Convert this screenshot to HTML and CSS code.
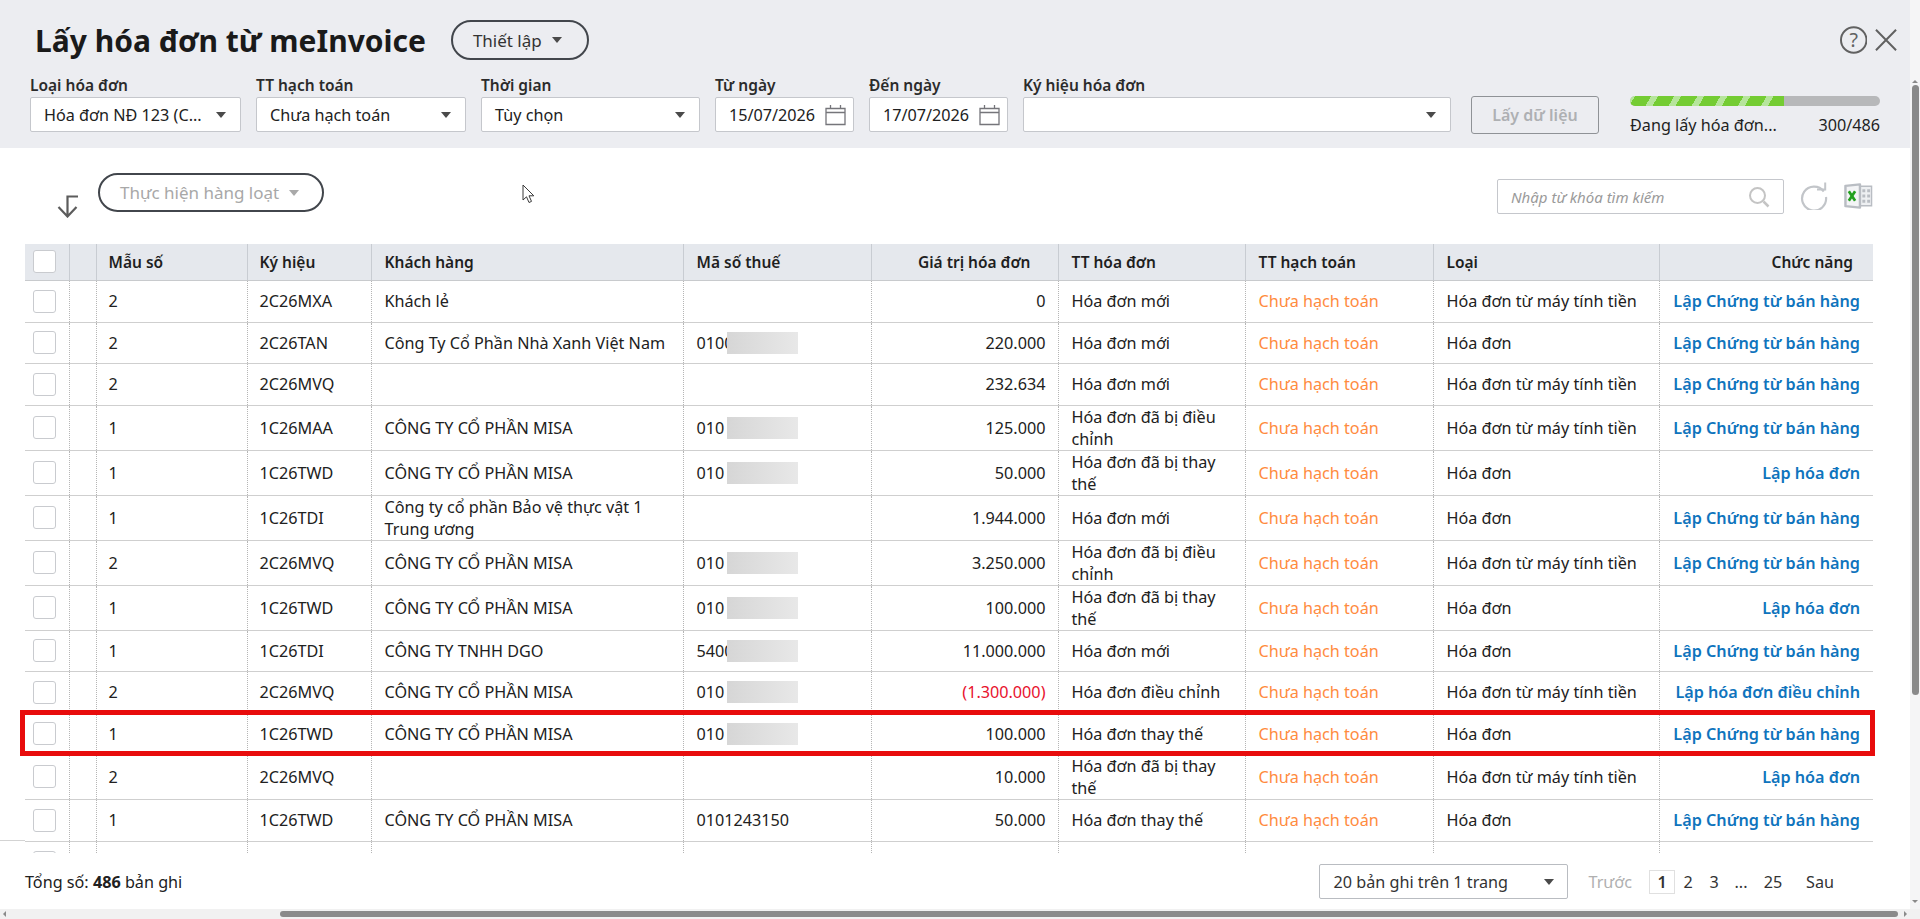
FILE: index.html
```html
<!DOCTYPE html>
<html lang="vi">
<head>
    <meta charset="UTF-8">
    <meta name="viewport" content="width=device-width, initial-scale=1.0">
    <title>Lấy hóa đơn từ meInvoice</title>
    <link rel="stylesheet" href="styles.css">
</head>
<body>
<div class="app">
    <div class="page">
        <header class="top">
            <div class="title-row">
                <h1 class="title">Lấy hóa đơn từ meInvoice</h1>
                <button class="pill pill-setup">Thiết lập <i class="caret"></i></button>
                <div class="top-icons">
                    <svg class="icon-help" width="28" height="28" viewBox="0 0 28 28"><circle cx="14" cy="14" r="13" fill="none" stroke="#616161" stroke-width="2"/><text x="14" y="21" text-anchor="middle" class="help-mark">?</text></svg>
                    <svg class="icon-close" width="24" height="24" viewBox="0 0 24 24"><path d="M2 1.5 L22.5 22.5 M22.5 1.5 L2 22.5" stroke="#616161" stroke-width="2" fill="none"/></svg>
                </div>
            </div>
            <div class="filters">
                <div class="field f-type"><label>Loại hóa đơn</label><div class="box"><span>Hóa đơn NĐ 123 (C...</span><i class="caret"></i></div></div>
                <div class="field f-status"><label>TT hạch toán</label><div class="box"><span>Chưa hạch toán</span><i class="caret"></i></div></div>
                <div class="field f-time"><label>Thời gian</label><div class="box"><span>Tùy chọn</span><i class="caret"></i></div></div>
                <div class="field f-date"><label>Từ ngày</label><div class="box date"><span>15/07/2026</span>
                    <svg class="cal" width="21" height="22" viewBox="0 0 21 22"><path d="M1 4.5h19v16H1z M1 8.5h19 M5.500 1v3.500 M15.500 1v3.500" fill="none" stroke="#75757a" stroke-width="1.300"/></svg></div></div>
                <div class="field f-date"><label>Đến ngày</label><div class="box date"><span>17/07/2026</span>
                    <svg class="cal" width="21" height="22" viewBox="0 0 21 22"><path d="M1 4.5h19v16H1z M1 8.5h19 M5.500 1v3.500 M15.500 1v3.500" fill="none" stroke="#75757a" stroke-width="1.300"/></svg></div></div>
                <div class="field f-sign"><label>Ký hiệu hóa đơn</label><div class="box"><span></span><i class="caret"></i></div></div>
                <button class="btn-fetch">Lấy dữ liệu</button>
                <div class="progress">
                    <div class="progress-bar"><div class="progress-fill"></div></div>
                    <div class="progress-text"><span>Đang lấy hóa đơn...</span><span>300/486</span></div>
                </div>
            </div>
        </header>

        <section class="toolbar">
            <svg class="icon-down" width="24" height="24" viewBox="0 0 24 24"><path d="M22 2.500H11.500V22 M2.500 13 L11.500 22.500 L20.500 13" fill="none" stroke="#5c5c5c" stroke-width="2.200"/></svg>
            <button class="pill pill-bulk">Thực hiện hàng loạt <i class="caret caret-light"></i></button>
            <svg class="cursor" width="14" height="20" viewBox="0 0 14 20"><path d="M1 1 V16 L4.500 12.800 L7 18.500 L9.500 17.400 L7 11.800 H11.800 Z" fill="#fff" stroke="#3a3a3a" stroke-width="1"/></svg>
            <div class="tools">
                <div class="search"><span>Nhập từ khóa tìm kiếm</span>
                    <svg width="22" height="22" viewBox="0 0 22 22"><circle cx="9.500" cy="9.500" r="7.500" fill="none" stroke="#c4c4c4" stroke-width="2"/><path d="M15.500 15.500 L20.500 20.500" stroke="#c4c4c4" stroke-width="2.500"/></svg>
                </div>
                <svg class="icon-refresh" width="28" height="28" viewBox="0 0 28 28"><path d="M23.800 9.500A12 12 0 1 0 26 15" fill="none" stroke="#c2c5c9" stroke-width="2.200"/><path d="M17 7.500H25.200V0.500" fill="none" stroke="#c2c5c9" stroke-width="2"/></svg>
                <svg class="icon-excel" width="29" height="26" viewBox="0 0 30 26"><path d="M16 3H28.500V23H16" fill="#eef0f2" stroke="#b9bdc3" stroke-width="1.500"/><path d="M1.500 2.500 L16.500 1 V25 L1.500 23.500 Z" fill="#f3f4f6" stroke="#b9bdc3" stroke-width="2.500" stroke-linejoin="round"/><path d="M19 6h3v3h-3z M24 6h3v3h-3z M19 11.500h3v3h-3z M24 11.500h3v3h-3z M19 17h3v3h-3z M24 17h3v3h-3z" fill="#b9bdc3"/><path d="M5 8 L11.500 18 M11.500 8 L5 18" stroke="#22a01e" stroke-width="2.800"/></svg>
            </div>
        </section>

        <section class="grid-wrap">
            <table class="grid">
                <colgroup>
                    <col class="c-check"><col class="c-blank"><col class="c-form"><col class="c-sign"><col class="c-cust"><col class="c-tax"><col class="c-value"><col class="c-inv"><col class="c-acc"><col class="c-kind"><col class="c-act">
                </colgroup>
                <thead>
                    <tr>
                        <th><i class="check"></i></th><th></th><th>Mẫu số</th><th>Ký hiệu</th><th>Khách hàng</th><th>Mã số thuế</th>
                        <th class="num th-value">Giá trị hóa đơn</th><th>TT hóa đơn</th><th>TT hạch toán</th><th>Loại</th><th class="num th-act">Chức năng</th>
                    </tr>
                </thead>
                <tbody>
                    <tr class="r42"><td><i class="check"></i></td><td></td><td>2</td><td>2C26MXA</td><td>Khách lẻ</td><td></td><td class="num">0</td><td>Hóa đơn mới</td><td class="acc">Chưa hạch toán</td><td>Hóa đơn từ máy tính tiền</td><td class="act"><a>Lập Chứng từ bán hàng</a></td></tr>
                    <tr class="r41"><td><i class="check"></i></td><td></td><td>2</td><td>2C26TAN</td><td>Công Ty Cổ Phần Nhà Xanh Việt Nam</td><td class="tax">0100<i class="blur"></i></td><td class="num">220.000</td><td>Hóa đơn mới</td><td class="acc">Chưa hạch toán</td><td>Hóa đơn</td><td class="act"><a>Lập Chứng từ bán hàng</a></td></tr>
                    <tr class="r42"><td><i class="check"></i></td><td></td><td>2</td><td>2C26MVQ</td><td></td><td></td><td class="num">232.634</td><td>Hóa đơn mới</td><td class="acc">Chưa hạch toán</td><td>Hóa đơn từ máy tính tiền</td><td class="act"><a>Lập Chứng từ bán hàng</a></td></tr>
                    <tr class="r45"><td><i class="check"></i></td><td></td><td>1</td><td>1C26MAA</td><td>CÔNG TY CỔ PHẦN MISA</td><td class="tax">010<i class="blur"></i></td><td class="num">125.000</td><td>Hóa đơn đã bị điều chỉnh</td><td class="acc">Chưa hạch toán</td><td>Hóa đơn từ máy tính tiền</td><td class="act"><a>Lập Chứng từ bán hàng</a></td></tr>
                    <tr class="r45"><td><i class="check"></i></td><td></td><td>1</td><td>1C26TWD</td><td>CÔNG TY CỔ PHẦN MISA</td><td class="tax">010<i class="blur"></i></td><td class="num">50.000</td><td>Hóa đơn đã bị thay thế</td><td class="acc">Chưa hạch toán</td><td>Hóa đơn</td><td class="act"><a>Lập hóa đơn</a></td></tr>
                    <tr class="r45"><td><i class="check"></i></td><td></td><td>1</td><td>1C26TDI</td><td>Công ty cổ phần Bảo vệ thực vật 1 Trung ương</td><td></td><td class="num">1.944.000</td><td>Hóa đơn mới</td><td class="acc">Chưa hạch toán</td><td>Hóa đơn</td><td class="act"><a>Lập Chứng từ bán hàng</a></td></tr>
                    <tr class="r45"><td><i class="check"></i></td><td></td><td>2</td><td>2C26MVQ</td><td>CÔNG TY CỔ PHẦN MISA</td><td class="tax">010<i class="blur"></i></td><td class="num">3.250.000</td><td>Hóa đơn đã bị điều chỉnh</td><td class="acc">Chưa hạch toán</td><td>Hóa đơn từ máy tính tiền</td><td class="act"><a>Lập Chứng từ bán hàng</a></td></tr>
                    <tr class="r45"><td><i class="check"></i></td><td></td><td>1</td><td>1C26TWD</td><td>CÔNG TY CỔ PHẦN MISA</td><td class="tax">010<i class="blur"></i></td><td class="num">100.000</td><td>Hóa đơn đã bị thay thế</td><td class="acc">Chưa hạch toán</td><td>Hóa đơn</td><td class="act"><a>Lập hóa đơn</a></td></tr>
                    <tr class="r41"><td><i class="check"></i></td><td></td><td>1</td><td>1C26TDI</td><td>CÔNG TY TNHH DGO</td><td class="tax">5400<i class="blur"></i></td><td class="num">11.000.000</td><td>Hóa đơn mới</td><td class="acc">Chưa hạch toán</td><td>Hóa đơn</td><td class="act"><a>Lập Chứng từ bán hàng</a></td></tr>
                    <tr class="r42"><td><i class="check"></i></td><td></td><td>2</td><td>2C26MVQ</td><td>CÔNG TY CỔ PHẦN MISA</td><td class="tax">010<i class="blur"></i></td><td class="num neg">(1.300.000)</td><td>Hóa đơn điều chỉnh</td><td class="acc">Chưa hạch toán</td><td>Hóa đơn từ máy tính tiền</td><td class="act"><a>Lập hóa đơn điều chỉnh</a></td></tr>
                    <tr class="r41"><td><i class="check"></i></td><td></td><td>1</td><td>1C26TWD</td><td>CÔNG TY CỔ PHẦN MISA</td><td class="tax">010<i class="blur"></i></td><td class="num">100.000</td><td>Hóa đơn thay thế</td><td class="acc">Chưa hạch toán</td><td>Hóa đơn</td><td class="act"><a>Lập Chứng từ bán hàng</a></td></tr>
                    <tr class="r42"><td><i class="check"></i></td><td></td><td>2</td><td>2C26MVQ</td><td></td><td></td><td class="num">10.000</td><td>Hóa đơn đã bị thay thế</td><td class="acc">Chưa hạch toán</td><td>Hóa đơn từ máy tính tiền</td><td class="act"><a>Lập hóa đơn</a></td></tr>
                    <tr class="r42"><td><i class="check"></i></td><td></td><td>1</td><td>1C26TWD</td><td>CÔNG TY CỔ PHẦN MISA</td><td>0101243150</td><td class="num">50.000</td><td>Hóa đơn thay thế</td><td class="acc">Chưa hạch toán</td><td>Hóa đơn</td><td class="act"><a>Lập Chứng từ bán hàng</a></td></tr>
                    <tr class="r42"><td><i class="check"></i></td><td></td><td></td><td></td><td></td><td></td><td></td><td></td><td></td><td></td><td></td></tr>
                </tbody>
            </table>
            <div class="mark"></div>
        </section>

        <footer class="foot">
            <div class="total">Tổng số: <b>486</b> bản ghi</div>
            <div class="pager">
                <div class="page-size"><span>20 bản ghi trên 1 trang</span><i class="caret"></i></div>
                <span class="prev">Trước</span>
                <span class="pg active">1</span>
                <span class="pg">2</span>
                <span class="pg">3</span>
                <span class="pg dots">...</span>
                <span class="pg last">25</span>
                <span class="next">Sau</span>
            </div>
        </footer>
    </div>

    <div class="vscroll"><i class="arrow-up"></i><div class="vthumb"></div><i class="arrow-down"></i></div>
    <div class="hscroll"><i class="arrow-left"></i><div class="hthumb"></div><i class="arrow-right"></i></div>
</div>
</body>
</html>
```

FILE: styles.css
```css
* {
    box-sizing: border-box;
}

html, body {
    margin: 0;
    height: 100%;
    overflow: hidden;
}

body {
    font-family: "Noto Sans", "Open Sans", sans-serif;
    font-size: 16.2px;
    color: #212121;
    background: #fff;
}

.app {
    position: relative;
    width: 1920px;
    height: 919px;
    overflow: hidden;
    display: flex;
    flex-direction: column;
}

.page {
    position: relative;
    width: 1910px;
    height: 909px;
    display: flex;
    flex-direction: column;
    overflow: hidden;
}

/* row line that runs out to the window edge */
.page::before {
    content: "";
    position: absolute;
    left: 0;
    top: 840px;
    width: 25px;
    height: 1px;
    background: #d3d3d3;
}

/* top band */
.top {
    height: 148px;
    background: #ecedf1;
    padding: 19px 0 0 30px;
    flex: none;
}

.title-row {
    display: flex;
    align-items: center;
    height: 42px;
}

.title {
    margin: 0 25px 0 5px;
    padding-top: 2px;
    font-size: 30px;
    font-weight: 700;
    color: #1a1a1a;
    line-height: 42px;
    white-space: nowrap;
}

.pill {
    font-family: inherit;
    font-size: 17px;
    height: 40px;
    background: transparent;
    border: 2px solid #42464c;
    border-radius: 20px;
    display: flex;
    align-items: center;
    color: #333;
    padding: 0;
}

.pill-setup {
    width: 138px;
    padding-left: 20px;
}

.caret {
    display: inline-block;
    width: 0;
    height: 0;
    border-left: 5px solid transparent;
    border-right: 5px solid transparent;
    border-top: 6px solid #4a4a4a;
    margin-left: 10px;
}

.caret-light {
    border-top-color: #a9a9a9;
}

.top-icons {
    margin-left: auto;
    width: 58px;
    margin-right: 12px;
    display: flex;
    align-items: center;
    gap: 7px;
}

.help-mark {
    font-family: "Noto Sans", sans-serif;
    font-size: 20px;
    fill: #616161;
}

.filters {
    display: flex;
    align-items: flex-start;
    margin-top: 14px;
}

.field {
    margin-right: 15px;
    flex: none;
}

.field label {
    display: block;
    font-size: 15.5px;
    font-weight: 600;
    line-height: 20px;
    margin-bottom: 2px;
    color: #2b2b2b;
}

.f-type { width: 211px; }
.f-status { width: 210px; }
.f-time { width: 219px; }
.f-date { width: 139px; }
.f-sign { width: 428px; margin-right: 20px; }

.box {
    height: 35px;
    background: #fff;
    border: 1px solid #c5c7cc;
    border-radius: 2px;
    display: flex;
    align-items: center;
    justify-content: space-between;
    padding: 0 14px 0 13px;
    white-space: nowrap;
}

.box .caret {
    margin: 0;
}

.date {
    padding: 0 7px 0 13px;
}

.btn-fetch {
    font-family: inherit;
    font-size: 16px;
    font-weight: 600;
    color: #aeb0b3;
    background: transparent;
    border: 1px solid #8f9296;
    border-radius: 3px;
    width: 128px;
    height: 38px;
    margin-top: 21px;
    flex: none;
}

.progress {
    width: 250px;
    margin: 21px 0 0 31px;
    flex: none;
}

.progress-bar {
    height: 10px;
    border-radius: 5px;
    background: #b7b8ba;
    overflow: hidden;
}

.progress-fill {
    width: 154px;
    height: 100%;
    background: repeating-linear-gradient(-60deg, #74cc33 0, #74cc33 14px, #b6e59c 14px, #b6e59c 20px);
}

.progress-text {
    display: flex;
    justify-content: space-between;
    margin-top: 9px;
    line-height: 20px;
    color: #1f1f1f;
}

/* toolbar above the grid */
.toolbar {
    position: relative;
    height: 96px;
    flex: none;
    padding: 25px 37px 0 56px;
    display: flex;
    align-items: flex-start;
}

.icon-down {
    margin-top: 21px;
}

.pill-bulk {
    width: 226px;
    margin-left: 18px;
    padding-left: 20px;
    color: #a8a8a8;
    height: 39px;
}

.cursor {
    position: absolute;
    left: 522px;
    top: 36px;
}

.tools {
    margin-left: auto;
    display: flex;
    align-items: flex-start;
    margin-top: 6px;
}

.search {
    width: 287px;
    height: 35px;
    background: #fff;
    border: 1px solid #c5c7cc;
    border-radius: 2px;
    display: flex;
    align-items: center;
    justify-content: space-between;
    padding: 0 13px 0 13px;
    font-style: italic;
    font-size: 15px;
    color: #9a9a9a;
}

.icon-refresh {
    margin: 3px 0 0 16px;
}

.icon-excel {
    margin: 4px 0 0 16px;
}

/* grid */
.grid-wrap {
    position: relative;
    height: 609px;
    flex: none;
    margin: 0 35px 0 20px;
    padding: 0 2px 0 5px;
    overflow: hidden;
}

.grid {
    table-layout: fixed;
    width: 1848px;
    border-collapse: collapse;
}

.c-check { width: 44px; }
.c-blank { width: 27px; }
.c-form { width: 151px; }
.c-sign { width: 124px; }
.c-cust { width: 312px; }
.c-tax { width: 188px; }
.c-value { width: 187px; }
.c-inv { width: 187px; }
.c-acc { width: 188px; }
.c-kind { width: 226px; }
.c-act { width: 214px; }

.grid th {
    height: 36px;
    background: #e5e8ed;
    font-size: 15.5px;
    font-weight: 600;
    text-align: left;
    padding: 0 12px;
    border-left: 1px solid #c8ccd2;
    border-bottom: 1px solid #c8cacd;
    color: #1f1f1f;
}

.grid th:first-child,
.grid td:first-child {
    border-left: 0;
    padding: 0 0 0 8px;
}

.grid td {
    padding: 0 12px;
    border-left: 1px dotted #b5b5b5;
    border-bottom: 1px solid #cfcfcf;
    line-height: 22px;
    color: #212121;
}

/* these columns start a pixel left of the text */
.grid th:nth-child(n+5):nth-child(-n+10),
.grid td:nth-child(n+5):nth-child(-n+10) {
    padding-left: 13px;
}

.grid .num {
    text-align: right;
}

.grid .th-value {
    padding-right: 27px;
}

.grid .th-act {
    padding-right: 20px;
}

.grid .act {
    text-align: right;
    padding-right: 13px;
    white-space: nowrap;
}

.r41 { height: 41px; }
.r42 { height: 42px; }
.r45 { height: 45px; }

.check {
    display: block;
    width: 23px;
    height: 23px;
    background: #fff;
    border: 1px solid #c9cbcf;
    border-radius: 3px;
}

.grid .acc {
    color: #ff8b3e;
}

.grid .neg {
    color: #e8112d;
}

.act a {
    color: #0f74bd;
    font-weight: 600;
}

.tax {
    position: relative;
    overflow: hidden;
}

.blur {
    position: absolute;
    left: 43px;
    top: 50%;
    margin-top: -11px;
    width: 71px;
    height: 22px;
    background: linear-gradient(90deg, #d6d6d6, #e8e8e8);
}

/* red annotation drawn over the row */
.mark {
    position: absolute;
    left: 0;
    top: 466px;
    width: 1855px;
    height: 46px;
    border: 5px solid #e80c0c;
}

/* footer */
.foot {
    flex: 1;
    display: flex;
    align-items: flex-start;
    justify-content: space-between;
    padding: 11px 76px 0 25px;
    background: #fff;
}

.total {
    line-height: 36px;
}

.pager {
    display: flex;
    align-items: center;
    color: #333;
}

.page-size {
    width: 249px;
    height: 35px;
    border: 1px solid #b9bcc1;
    border-radius: 2px;
    display: flex;
    align-items: center;
    justify-content: space-between;
    padding: 0 13px;
}

.page-size .caret {
    margin: 0;
}

.prev {
    color: #b0b0b0;
    margin-left: 20px;
}

.pg {
    min-width: 26px;
    text-align: center;
}

.active {
    border: 1px solid #e0e0e0;
    height: 24px;
    line-height: 22px;
    margin-left: 17px;
    font-weight: 600;
}

.dots {
    margin-left: 1px;
}

.last {
    margin-left: 6px;
}

.next {
    margin-left: 20px;
}

/* scrollbars sit over the window edge */
.vscroll {
    position: absolute;
    right: 0;
    top: 0;
    width: 10px;
    height: 909px;
    background: #f5f5f6;
}

.vthumb {
    position: absolute;
    left: 2px;
    top: 85px;
    width: 7px;
    height: 610px;
    background: #8a8a8a;
    border-radius: 4px;
}

.arrow-up, .arrow-down, .arrow-left, .arrow-right {
    position: absolute;
    width: 0;
    height: 0;
}

.arrow-up {
    left: 2px;
    top: 77px;
    border: 3px solid transparent;
    border-bottom: 3px solid #8a8a8a;
}

.arrow-down {
    left: 2px;
    bottom: 3px;
    border: 3px solid transparent;
    border-top: 3px solid #8a8a8a;
}

.hscroll {
    position: relative;
    height: 10px;
    flex: none;
    background: #f1f1f1;
}

.hthumb {
    position: absolute;
    left: 280px;
    top: 2px;
    width: 1618px;
    height: 6px;
    background: #8a8a8a;
    border-radius: 3px;
}

.arrow-left {
    left: 0;
    top: 2px;
    border: 3px solid transparent;
    border-right: 3px solid #8a8a8a;
}

.arrow-right {
    left: 1904px;
    top: 2px;
    border: 3px solid transparent;
    border-left: 3px solid #8a8a8a;
}
```
